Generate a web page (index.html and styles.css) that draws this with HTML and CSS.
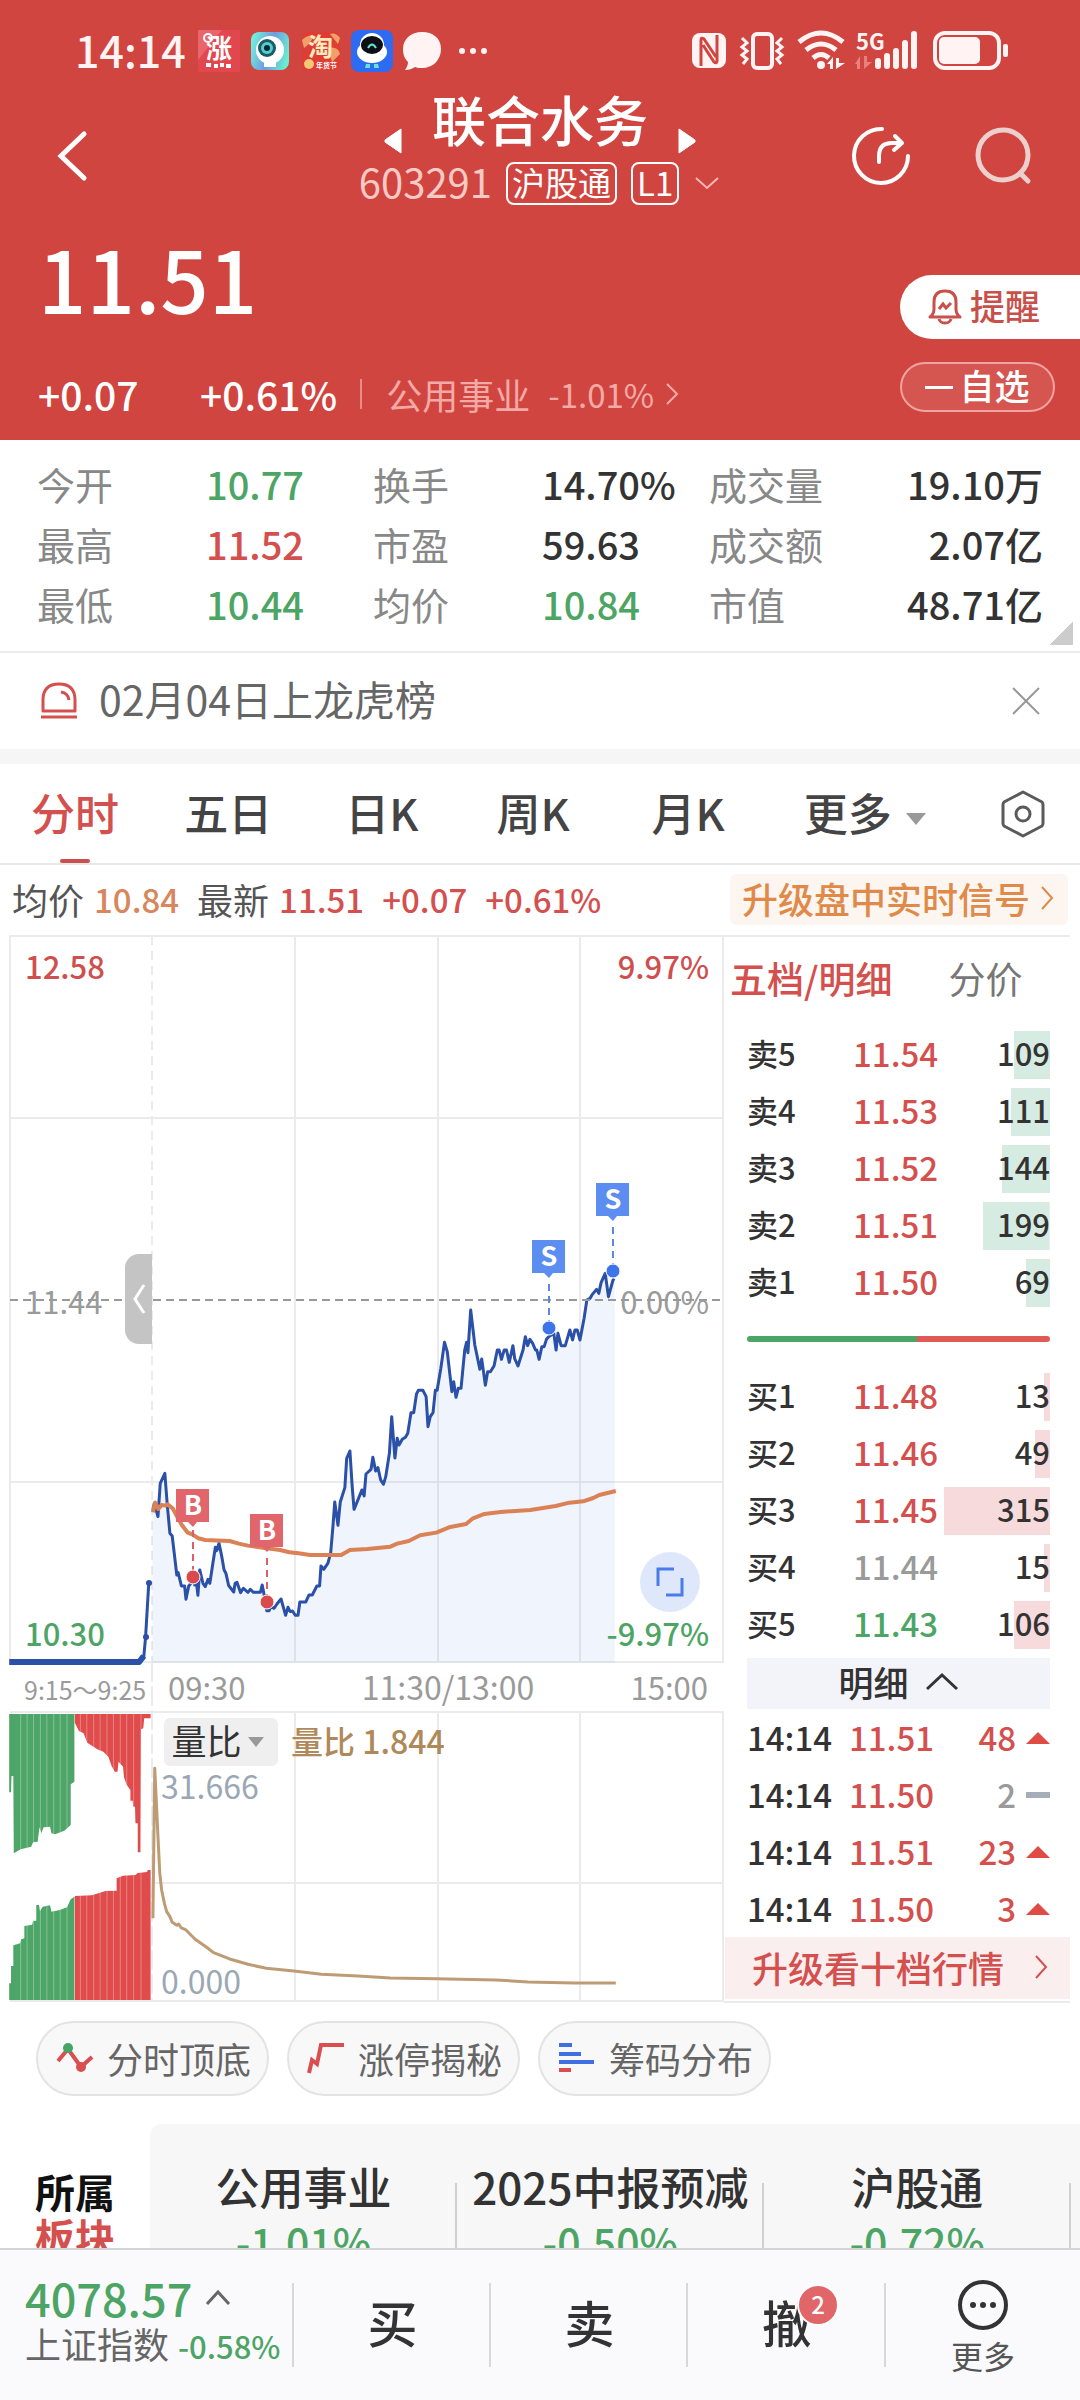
FILE: index.html
```html
<!DOCTYPE html>
<html lang="zh-CN">
<head>
<meta charset="utf-8">
<meta name="viewport" content="width=device-width, initial-scale=1">
<title>联合水务 603291</title>
<link rel="stylesheet" href="styles.css">
</head>
<body>
<div class="app">
  <header class="top">
    <div class="status">
      <span class="clock">14:14</span>
      <svg class="app-icon" viewBox="0 0 42 42"><rect width="42" height="42" fill="#e2474f"/><path d="M0 0H24L0 30Z" fill="#e9656c"/><text x="8" y="28" font-size="26" font-weight="700" fill="#fff">涨</text><circle cx="10" cy="8" r="4" fill="none" stroke="#fff" stroke-width="2"/><path d="M8 35h5M16 36h4M22 35h4M28 36h5" stroke="#fff" stroke-width="4"/></svg>
      <svg class="app-icon" viewBox="0 0 42 42"><defs><linearGradient id="cam" x1="0" y1="0.3" x2="1" y2="0.6"><stop offset="0" stop-color="#6ff0dc"/><stop offset=".5" stop-color="#6f9be0"/><stop offset="1" stop-color="#68efd0"/></linearGradient></defs><rect x="2" y="2" width="38" height="38" rx="8" fill="url(#cam)"/><circle cx="21" cy="20" r="14" fill="#fff"/><path d="M15 37v-4h12v4z" fill="#fff"/><circle cx="18" cy="18" r="9" fill="#1c5a68"/><circle cx="18" cy="18" r="6" fill="#4fd0cf"/><circle cx="18" cy="18" r="3" fill="#123"/></svg>
      <svg class="app-icon" viewBox="0 0 42 42"><rect x="2" y="2" width="38" height="38" rx="6" fill="#df3d33"/><path d="M2 10Q8 4 14 6Q10 14 4 18ZM40 8Q36 2 30 4L38 14ZM28 18Q38 16 40 24L32 32Z" fill="#f0a06a"/><circle cx="9" cy="34" r="5" fill="#f5c878"/><text x="8" y="26" font-size="25" font-weight="700" fill="#ffe9bd">淘</text><text x="16" y="38" font-size="7" font-weight="700" fill="#fff">年货节</text></svg>
      <svg class="app-icon" viewBox="0 0 42 42"><rect width="42" height="42" rx="8" fill="#2d6bf2"/><ellipse cx="21" cy="22" rx="15" ry="11" fill="#fff"/><circle cx="21" cy="15" r="12" fill="#fff"/><ellipse cx="21" cy="15" rx="11" ry="9" fill="#0c1016"/><path d="M17 18q4-7 8 0" fill="none" stroke="#62e6d0" stroke-width="2"/><path d="M15 34h4v4h-5zM23 34h4l1 4h-5z" fill="#62e6d0"/></svg>
      <svg class="bubble" viewBox="0 0 40 40"><path d="M20 1C9 1 1 8 1 18c0 6 2 10 5 13 0 3-1 5-3 8 4 0 7-1 10-3 2 1 5 1 7 1 11 0 19-8 19-19S31 1 20 1Z" fill="#fff4f3"/></svg>
      <svg class="dots" viewBox="0 0 30 8"><g fill="#fff4f3"><circle cx="4" cy="4" r="3"/><circle cx="15" cy="4" r="3"/><circle cx="26" cy="4" r="3"/></g></svg>
      <span class="spring"></span>
      <svg class="sys" viewBox="0 0 318 42" role="img" aria-label="NFC 振动 WiFi 5G 电量">
        <rect x="0" y="3" width="34" height="35" rx="8" fill="#fff4f3"/>
        <path d="M9 36V10q0-3 3-1l12 18M25 5v26q0 3-3 1L11 15" fill="none" stroke="#d0453f" stroke-width="3"/>
        <rect x="61" y="4" width="19" height="34" rx="4" fill="none" stroke="#fff4f3" stroke-width="4"/>
        <path d="M50 8l5 5-5 4 5 4-5 4 5 4-4 5M90 8l-5 5 5 4-5 4 5 4-5 4 4 5" fill="none" stroke="#fff4f3" stroke-width="3"/>
        <g fill="none" stroke="#fff4f3" stroke-width="5"><path d="M107 12q22-18 44 0M114 20q15-12 30 0M121 28q8-7 16 0"/></g>
        <circle cx="129" cy="35" r="4" fill="#fff4f3"/><path d="M135 34l6-7v12h-3v-5zM144 39V28h3v5h6z" fill="#fff4f3"/>
        <text x="164" y="20" font-size="22" font-weight="700" fill="#fff4f3">5G</text>
        <path d="M163 34l5-8v13h-3v-5zM172 39V26h3v6h5z" fill="#e8807c"/>
        <g stroke="#fff4f3" stroke-width="6" stroke-linecap="round"><path d="M186 31v5M195 26v10M204 21v15M213 13v23M222 4v32"/></g>
        <rect x="243" y="3" width="64" height="35" rx="10" fill="none" stroke="#fff4f3" stroke-width="4"/><rect x="247" y="7" width="41" height="27" rx="5" fill="#fff4f3"/><rect x="311" y="14" width="5" height="13" rx="2" fill="#fff4f3"/>
      </svg>
    </div>

    <nav class="nav">
      <button class="icon-btn back" aria-label="返回"><svg viewBox="0 0 30 50"><path d="M27 3L4 25l23 22" fill="none" stroke="#fff" stroke-width="5" stroke-linecap="round"/></svg></button>
      <div class="title">
        <div class="title-row">
          <button class="icon-btn tri" aria-label="上一只"><svg viewBox="0 0 18 26"><path d="M17 1v24L1 14v-2z" fill="#fff" stroke="#fff" stroke-linejoin="round"/></svg></button>
          <h1>联合水务</h1>
          <button class="icon-btn tri" aria-label="下一只"><svg viewBox="0 0 18 26"><path d="M1 1v24l16-11v-2z" fill="#fff" stroke="#fff" stroke-linejoin="round"/></svg></button>
        </div>
        <div class="code-row">
          <span class="code">603291</span><span class="tag">沪股通</span><span class="tag">L1</span>
          <button class="icon-btn more" aria-label="展开"><svg viewBox="0 0 26 14"><path d="M2 2l11 10L24 2" fill="none" stroke="#f6b8b5" stroke-width="2"/></svg></button>
        </div>
      </div>
      <div class="nav-right">
        <button class="icon-btn tool" aria-label="分享"><svg viewBox="0 0 60 60"><path d="M31 3A27 27 0 1 0 57 30" fill="none" stroke="#fff" stroke-width="4" stroke-linecap="round"/><path d="M28 36v-6Q28 17 41 17h9M44 10l7 7-8 7" fill="none" stroke="#fff" stroke-width="4" stroke-linecap="round" stroke-linejoin="round"/></svg></button>
        <button class="icon-btn tool" aria-label="搜索"><svg viewBox="0 0 60 60"><circle cx="30" cy="29" r="25" fill="none" stroke="#edcfce" stroke-width="5"/><path d="M47 47l8 8" stroke="#edcfce" stroke-width="5" stroke-linecap="round"/></svg></button>
      </div>
    </nav>

    <section class="quote">
      <div class="quote-main">
        <div class="price">11.51</div>
        <div class="change">
          <span class="diff">+0.07</span><span class="pct">+0.61%</span><i class="vline"></i>
          <a class="sector" href="#sector">公用事业 <small>-1.01%</small><svg viewBox="0 0 14 24"><path d="M2 2l10 10L2 22" fill="none" stroke="#f3aaa6" stroke-width="2"/></svg></a>
        </div>
      </div>
      <div class="quote-actions">
        <button class="remind"><svg viewBox="0 0 34 36"><path d="M2 28q4-3 4-8v-7Q6 2 17 2t11 11v7q0 5 4 8zM11 30q1 4 6 4t6-4" fill="none" stroke="#c8504a" stroke-width="3" stroke-linejoin="round"/><path d="M11 20l4-5 3 4 5-5" fill="none" stroke="#c8504a" stroke-width="3"/></svg>提醒</button>
        <button class="fav"><i></i>自选</button>
      </div>
    </section>
  </header>

  <main class="scroll">
    <dl class="stats">
      <dt>今开</dt><dd class="down">10.77</dd><dt>换手</dt><dd>14.70%</dd><dt>成交量</dt><dd class="end">19.10万</dd>
      <dt>最高</dt><dd class="up">11.52</dd><dt>市盈</dt><dd>59.63</dd><dt>成交额</dt><dd class="end">2.07亿</dd>
      <dt>最低</dt><dd class="down">10.44</dd><dt>均价</dt><dd class="down">10.84</dd><dt>市值</dt><dd class="end">48.71亿</dd>
    </dl>

    <div class="notice">
      <svg viewBox="0 0 38 38"><path d="M3 29V18Q3 2 19 2t16 16v11z" fill="none" stroke="#d4504e" stroke-width="3" stroke-linejoin="round"/><path d="M21 10q7 1 8 8" fill="none" stroke="#d4504e" stroke-width="3"/><path d="M1 35h36" stroke="#d4504e" stroke-width="3"/></svg>
      <span>02月04日上龙虎榜</span>
      <button class="icon-btn close" aria-label="关闭"><svg viewBox="0 0 28 28"><path d="M1 1l26 26M27 1L1 27" stroke="#999" stroke-width="2"/></svg></button>
    </div>

    <div class="tabs" role="tablist">
      <button role="tab" aria-selected="true" class="on">分时</button><button role="tab">五日</button><button role="tab">日K</button><button role="tab">周K</button><button role="tab">月K</button><button role="tab">更多<i class="caret"></i></button>
      <button class="hex" aria-label="设置"><svg viewBox="0 0 44 48"><path d="M22 2L41 12Q42 13 42 15V33Q42 35 41 36L22 46 3 36Q2 35 2 33V15Q2 13 3 12Z" fill="none" stroke="#5a5a5a" stroke-width="3" stroke-linejoin="round"/><circle cx="22" cy="24" r="7" fill="none" stroke="#5a5a5a" stroke-width="3"/></svg></button>
    </div>

    <div class="info">
      <span>均价</span><b class="avg">10.84</b><span class="next">最新</span><b class="up">11.51</b><b class="up next">+0.07</b><b class="up next">+0.61%</b>
      <a class="signal" href="#signal">升级盘中实时信号<svg viewBox="0 0 14 26"><path d="M2 2l10 11L2 24" fill="none" stroke="#e08a4a" stroke-width="2"/></svg></a>
    </div>

    <div class="board">
      <div class="chart">
        <svg class="plot" viewBox="0 935 724 1068">
          <g fill="none" stroke="#ebebeb" stroke-width="2">
            <path d="M9 936H724M10 1118H724M10 1482H724M10 1662H724M10 1712H724M152 1883H724M10 2001H724"/>
            <path d="M10 936V1662M295 936V1662M438 936V1662M580 936V1662M723 936V1662M295 1712V2001M438 1712V2001M580 1712V2001M723 1712V2001"/>
            <path d="M152 936V1662" stroke-dasharray="9 6"/><path d="M152 1662V2001" stroke-dasharray="20 4"/>
          </g>
          <g transform="translate(0 1300) scale(.4592 .3333)">
            <path fill="#3d7de8" fill-opacity=".08" d="M332 1088V610L344 650 349 550 359 520 364 610 370 700 375 708 385 825 395 858 405 898 411 858 420 832 431 886 435 810 447 860 457 850 469 742 477 730 488 810 498 857 509 876 516 847 524 878 567 877 571 855 581 932 597 925 612 897 622 946 649 946 653 906 666 906 680 885 696 858 699 798 714 790 720 760 729 606 736 676 741 606 751 563 755 475 762 453 771 628 788 570 793 588 797 522 808 508 812 472 835 553 848 460 853 350 860 474 865 415 888 400 895 338 907 282 921 271 928 290 932 380 943 338 948 271 968 127 984 275 993 292 1004 265 1016 127 1025 30 1034 135 1045 208 1057 256 1076 197 1083 150 1128 198 1144 110 1174 178 1195 110 1231 137 1263 120 1278 0 1299-32 1318-80 1325-10 1339-60V1088Z"/>
            <g fill="none" stroke-linejoin="round">
              <path vector-effect="non-scaling-stroke" stroke="#2b50a8" stroke-width="3" d="M333 630L336 610 344 650 349 550 359 520 364 610 370 700 375 708 385 825 388 818 395 858 402 858 405 898 411 858 416 850 420 832 424 855 428 850 431 886 435 810 442 850 447 860 453 838 457 850 463 795 469 742 472 752 477 730 483 770 488 810 492 820 498 857 509 876 512 850 516 847 524 878 530 865 540 877 545 868 552 877 567 877 571 855 576 890 581 932 586 932 590 920 597 925 603 912 612 897 622 946 627 922 632 935 637 933 643 946 649 946 653 906 666 906 673 885 680 885 690 858 696 858 699 798 705 808 714 790 720 760 725 680 729 606 736 676 741 606 751 563 755 475 762 453 767 560 771 628 778 605 788 570 793 588 797 522 808 508 812 472 818 513 823 503 829 540 835 553 840 530 848 460 853 350 860 474 865 415 869 435 876 418 883 412 888 400 895 338 901 338 907 282 911 271 921 271 928 290 932 380 937 350 943 338 948 271 952 271 960 205 968 127 974 155 984 275 988 245 993 292 998 265 1004 265 1012 150 1016 127 1019 158 1025 30 1034 135 1045 208 1049 177 1057 256 1062 215 1068 215 1076 197 1083 150 1087 150 1092 178 1098 150 1103 150 1109 187 1117 137 1121 177 1128 198 1139 150 1144 110 1149 137 1154 118 1160 130 1166 150 1169 150 1174 178 1180 140 1185 140 1190 118 1195 110 1206 100 1211 150 1215 100 1222 137 1231 137 1241 90 1247 120 1252 90 1257 90 1263 120 1272 55 1278 0 1285-5 1290-17 1299-32 1304-20 1309-52 1318-80 1325-10 1335-60 1338-64"/>
              <path vector-effect="non-scaling-stroke" stroke="#2b50a8" stroke-width="3" d="M303 1086L313 1072 317 1012 324 848"/>
              <path vector-effect="non-scaling-stroke" stroke="#2b50a8" stroke-width="6" d="M20 1086H303L313 1068"/>
              <path vector-effect="non-scaling-stroke" stroke="#da8256" stroke-width="4" d="M333 637L338 608 345 627 352 615 360 617 365 613 376 625 385 648 396 675 408 697 420 704 432 715 447 720 500 723 520 731 540 737 581 745 610 750 630 757 650 760 675 765 743 765 762 750 800 747 850 740 865 731 890 723 915 706 950 698 978 682 1015 672 1030 655 1055 642 1090 636 1155 630 1210 618 1240 608 1270 604 1292 594 1305 585 1341 573"/>
            </g>
          </g>
          <circle cx="149" cy="1583" r="3" fill="#2b50a8"/><circle cx="146" cy="1637" r="3" fill="#2b50a8"/>
          <path d="M10 1300H724" stroke="#999" stroke-width="2" stroke-dasharray="8 5"/>
          <g class="flag">
            <path d="M193 1530V1575M267 1558V1600" stroke="#d9606a" stroke-width="2" stroke-dasharray="7 5"/>
            <path d="M549 1284V1326M613 1227V1269" stroke="#5a8ae0" stroke-width="2" stroke-dasharray="7 5"/>
            <g fill="#e0666c"><path d="M176 1489h33v33h-12l-4 5-5-5h-12zM250 1514h33v33h-12l-4 5-5-5h-12z"/></g>
            <g fill="#5c8df0"><path d="M532 1240h33v33h-12l-4 5-5-5h-12zM596 1183h33v33h-12l-4 5-5-5h-12z"/></g>
            <g fill="#d94a4c" stroke="#fff"><circle cx="193" cy="1577" r="7"/><circle cx="267" cy="1602" r="7"/></g>
            <g fill="#3d74ea" stroke="#fff"><circle cx="549" cy="1328" r="7"/><circle cx="613" cy="1271" r="7"/></g>
            <g fill="#fff" font-size="27" font-weight="700" text-anchor="middle"><text x="193" y="1515">B</text><text x="267" y="1540">B</text><text x="549" y="1266">S</text><text x="613" y="1209">S</text></g>
          </g>
          <g font-size="31" font-weight="500">
            <text x="25" y="979" fill="#cf4f4f">12.58</text><text x="709" y="979" fill="#cf4f4f" text-anchor="end">9.97%</text>
            <text x="25" y="1646" fill="#4da565">10.30</text><text x="709" y="1646" fill="#4da565" text-anchor="end">-9.97%</text>
            <g fill="#9a9a9a" font-weight="400"><text x="25" y="1314">11.44</text><text x="709" y="1314" text-anchor="end">0.00%</text>
            <text x="24" y="1700" font-size="25">9:15～9:25</text><text x="168" y="1700">09:30</text><text x="448" y="1700" font-size="32" text-anchor="middle">11:30/13:00</text><text x="708" y="1700" text-anchor="end">15:00</text></g>
            <text x="291" y="1754" font-size="32" fill="#b0895a">量比 1.844</text>
            <g fill="#9aa8b4" font-size="32" font-weight="400"><text x="161" y="1799">31.666</text><text x="161" y="1994">0.000</text></g>
          </g>
          <g transform="translate(0 1690) scale(.4592 .3333)">
            <path fill="#4da667" d="M20 72H162V275L154 283V405L140 422 120 433 112 430 109 410 95 412 90 430 86 412 82 455 72 457 68 470 45 478 30 490 29 258H25L24 307H20ZM20 930V880H24V828H29V766L44 760 46 748 53 745V708L70 704 72 692H79V645H85L87 663 93 650 109 646 112 665 130 660 146 652 154 628 162 620V930Z"/>
            <path fill="#e04c4c" d="M163 72H328V85H314L312 115 307 118 306 487H300V400H295L294 350H290L289 332H284V300L276 285 270 262 268 230 258 215 256 245H250L243 228 236 200 225 185 212 178 190 158 182 130 172 123 163 98ZM163 930V618L200 616 230 603 254 602V565L268 557 295 555 300 549 320 546 322 540H328V930Z"/>
            <path vector-effect="non-scaling-stroke" fill="none" stroke="#fff" stroke-opacity=".3" d="M45 72V930M59 72V930M73 72V930M88 72V930M102 72V930M117 72V930M131 72V930M146 72V930M175 72V930M189 72V930M204 72V930M218 72V930M233 72V930M247 72V930M262 72V930M276 72V930M291 72V930M307 72V930"/>
            <path vector-effect="non-scaling-stroke" fill="none" stroke="#bd9c75" stroke-width="3" stroke-linejoin="round" d="M333 685L337 235 344 440 348 550 352 600 358 640 363 665 370 680 375 697 385 706 389 702 395 714 405 720 425 748 450 772 465 788 500 807 540 823 580 835 640 843 700 853 780 858 850 864 950 866 1080 870 1150 876 1250 879 1341 879"/>
          </g>
        </svg>
        <button class="handle" aria-label="收起"><svg viewBox="0 0 16 32"><path d="M13 2L4 16l9 14" fill="none" stroke="#fff" stroke-width="3"/></svg></button>
        <button class="expand" aria-label="全屏"><svg viewBox="0 0 60 60"><path d="M18 34V17H34M42 26V43H26" fill="none" stroke="#4a7ce8" stroke-width="3"/></svg></button>
        <div class="metric"><select aria-label="指标"><option>量比</option></select><i class="caret"></i></div>
      </div>

      <aside class="side">
        <div class="side-tabs"><button class="on">五档/明细</button><button>分价</button></div>
        <table class="depth sell">
          <tr style="--w:12%"><th scope="row">卖5</th><td class="up">11.54</td><td>109</td></tr>
          <tr style="--w:13%"><th scope="row">卖4</th><td class="up">11.53</td><td>111</td></tr>
          <tr style="--w:16%"><th scope="row">卖3</th><td class="up">11.52</td><td>144</td></tr>
          <tr style="--w:22%"><th scope="row">卖2</th><td class="up">11.51</td><td>199</td></tr>
          <tr style="--w:8%"><th scope="row">卖1</th><td class="up">11.50</td><td>69</td></tr>
        </table>
        <div class="ratio"><i style="flex-grow:56"></i><i style="flex-grow:44"></i></div>
        <table class="depth buy">
          <tr style="--w:2%"><th scope="row">买1</th><td class="up">11.48</td><td>13</td></tr>
          <tr style="--w:5%"><th scope="row">买2</th><td class="up">11.46</td><td>49</td></tr>
          <tr style="--w:35%"><th scope="row">买3</th><td class="up">11.45</td><td>315</td></tr>
          <tr style="--w:2%"><th scope="row">买4</th><td class="flat">11.44</td><td>15</td></tr>
          <tr style="--w:12%"><th scope="row">买5</th><td class="down">11.43</td><td>106</td></tr>
        </table>
        <button class="ticks-head">明细<svg viewBox="0 0 34 18"><path d="M2 16L17 2l15 14" fill="none" stroke="#333" stroke-width="3"/></svg></button>
        <table class="ticks">
          <tr><td>14:14</td><td class="up">11.51</td><td class="up">48</td><td><i class="rise"></i></td></tr>
          <tr><td>14:14</td><td class="up">11.50</td><td class="flat">2</td><td><i class="same"></i></td></tr>
          <tr><td>14:14</td><td class="up">11.51</td><td class="up">23</td><td><i class="rise"></i></td></tr>
          <tr><td>14:14</td><td class="up">11.50</td><td class="up">3</td><td><i class="rise"></i></td></tr>
        </table>
        <a class="upgrade" href="#level2">升级看十档行情<svg viewBox="0 0 14 26"><path d="M2 2l10 11L2 24" fill="none" stroke="#d4504e" stroke-width="2"/></svg></a>
      </aside>
    </div>

    <div class="chips">
      <button><svg viewBox="0 0 38 32"><path d="M2 19L12 7 25 25 36 15" fill="none" stroke="#d94f50" stroke-width="4"/><circle cx="12" cy="6" r="5" fill="#45a566"/><circle cx="25" cy="25" r="5" fill="#d94f50"/></svg>分时顶底</button>
      <button><svg viewBox="0 0 38 32"><path d="M2 31L5 18 10 22 14 3H37" fill="none" stroke="#d94f50" stroke-width="4"/></svg>涨停揭秘</button>
      <button><svg viewBox="0 0 38 32"><path d="M1 3H14M1 12H23M1 20H36" stroke="#3f6fe0" stroke-width="4"/><path d="M1 28H13" stroke="#d94f50" stroke-width="4"/></svg>筹码分布</button>
    </div>

    <section class="sectors" id="sector">
      <h2><span>所属</span><span class="up">板块</span></h2>
      <ul>
        <li><span>公用事业</span><b>-1.01%</b></li>
        <li><span>2025中报预减</span><b>-0.50%</b></li>
        <li><span>沪股通</span><b>-0.72%</b></li>
      </ul>
    </section>
  </main>

  <footer class="dock">
    <button class="index"><span class="index-top">4078.57<svg viewBox="0 0 26 16"><path d="M2 14L13 2l11 12" fill="none" stroke="#666" stroke-width="3"/></svg></span><span class="index-name">上证指数<small>-0.58%</small></span></button>
    <button class="act">买</button>
    <button class="act">卖</button>
    <button class="act"><span class="badged">撤<em>2</em></span></button>
    <button class="others"><svg viewBox="0 0 52 52"><circle cx="26" cy="26" r="23" fill="none" stroke="#333" stroke-width="4"/><g fill="#333"><circle cx="16" cy="26" r="3"/><circle cx="26" cy="26" r="3"/><circle cx="36" cy="26" r="3"/></g></svg>更多</button>
  </footer>
</div>
</body>
</html>
```
FILE: styles.css
```css
* { box-sizing: border-box; }
body { margin: 0; font-family: "Noto Sans CJK SC", sans-serif; color: #333; background: #fff; }
button, select { font: inherit; color: inherit; background: none; border: 0; padding: 0; margin: 0; cursor: pointer; }
a { color: inherit; text-decoration: none; }
svg { display: block; flex: none; overflow: visible; }
table { border-collapse: separate; border-spacing: 0; width: 100%; table-layout: fixed; }
td, th { padding: 0; font-weight: inherit; text-align: left; }
.up { color: #d4504e; }
.down { color: #4da565; }
.flat { color: #9a9a9a; }
.caret { display: inline-block; border: 10px solid transparent; border-top: 12px solid #999; border-bottom: 0; }

.app { height: 100vh; display: flex; flex-direction: column; }
.top { flex: none; background: #d0453f; color: #fff; }

.status { display: flex; align-items: center; height: 88px; padding: 14px 70px 0 75px; color: #fff4f3; }
.clock { font-size: 43px; font-weight: 500; line-height: 60px; padding-bottom: 4px; margin-right: 12px; }
.app-icon { width: 42px; height: 42px; margin-right: 9px; }
.bubble { width: 40px; height: 40px; }
.dots { width: 30px; height: 8px; margin-left: 16px; }
.spring { flex: 1; }
.sys { width: 318px; height: 42px; }

.icon-btn { display: flex; align-items: center; justify-content: center; }
.nav { display: grid; grid-template-columns: 1fr auto 1fr; align-items: end; padding: 0 47px; }
.back { width: 50px; height: 98px; }
.back svg { width: 30px; height: 50px; }
.title-row { display: flex; align-items: center; justify-content: center; gap: 30px; }
.title h1 { margin: 0; font-size: 54px; font-weight: 500; line-height: 62px; }
.tri { padding-top: 40px; height: 62px; align-items: flex-start; }
.tri svg { width: 18px; height: 26px; }
.code-row { display: flex; align-items: center; justify-content: center; gap: 14px; margin-top: 11px; height: 44px; }
.code { font-size: 40px; line-height: 40px; padding-bottom: 4px; color: #f9c9c6; }
.tag { border: 2px solid #fff; border-radius: 8px; font-size: 33px; line-height: 36px; height: 43px; padding: 0 4px; }
.more { width: 28px; height: 44px; }
.more svg { width: 26px; height: 14px; }
.nav-right { display: flex; justify-content: flex-end; gap: 62px; }
.tool { height: 98px; }
.tool svg { width: 60px; height: 60px; }

.quote { display: flex; justify-content: space-between; padding: 24px 0 21px 38px; }
.price { font-size: 85px; font-weight: 500; line-height: 96px; }
.change { display: flex; align-items: center; margin-top: 44px; font-size: 39px; font-weight: 500; line-height: 50px; }
.diff { min-width: 162px; }
.vline { width: 2px; height: 30px; background: #e58d89; margin: 0 24px 0 23px; }
.sector { display: flex; align-items: center; font-size: 36px; font-weight: 400; color: #f3aaa6; }
.sector small { font-size: 33px; margin: 0 11px 0 18px; }
.sector svg { width: 14px; height: 24px; }
.quote-actions { display: flex; flex-direction: column; gap: 23px; width: 180px; padding-top: 46px; }
.remind { display: flex; align-items: center; height: 64px; padding: 0 0 4px 28px; gap: 8px; background: #fff; color: #c8504a; border-radius: 32px 0 0 32px; font-size: 35px; font-weight: 500; line-height: 60px; }
.remind svg { width: 34px; height: 36px; margin-top: 4px; }
.fav { display: flex; align-items: center; justify-content: center; gap: 6px; width: 155px; height: 50px; border: 2px solid #f0a3a0; border-radius: 25px; background: #d55651; font-size: 35px; font-weight: 500; line-height: 42px; padding-bottom: 4px; }
.fav i { width: 28px; height: 3px; margin-top: 4px; background: #fff; }

.scroll { flex: 1; min-height: 0; overflow-y: auto; scrollbar-width: none; }

.stats { display: grid; grid-template-columns: 169fr 167fr 169fr 167fr 140fr 194fr; margin: 0; padding: 14px 37px 17px; border-bottom: 2px solid #ededed; line-height: 59px; grid-auto-rows: 60px; font-size: 38px; background: linear-gradient(135deg, transparent 50%, #ccc 50%) right 7px bottom 6px / 23px 23px no-repeat; }
.stats dt { color: #888; }
.stats dd { margin: 0; font-size: 38px; font-weight: 500; white-space: nowrap; }
.stats .end { text-align: right; }

.notice { display: flex; align-items: center; height: 96px; padding: 0 40px; font-size: 41px; line-height: 60px; color: #666; }
.notice > svg { width: 38px; height: 38px; margin-right: 21px; }
.notice span { flex: 1; padding-bottom: 6px; }
.close svg { width: 28px; height: 28px; }

.tabs { display: grid; grid-template-columns: 153fr 161fr 151fr 155fr 152fr 197fr 79fr; border-top: 15px solid #f6f6f6; border-bottom: 2px solid #e8e8e8; padding-left: 31px; font-size: 44px; font-weight: 500; line-height: 90px; color: #444; }
.tabs button { height: 99px; padding-bottom: 4px; text-align: left; position: relative; white-space: nowrap; }
.tabs .on { color: #d4504e; }
.tabs .on::after { content: ""; position: absolute; left: 29px; bottom: 0; width: 30px; height: 4px; background: #c9504f; border-radius: 2px; }
.tabs .caret { margin-left: 14px; vertical-align: 6px; }
.hex svg { width: 44px; height: 48px; margin-top: 4px; }

.info { display: flex; align-items: center; height: 70px; padding: 0 12px 2px; font-size: 36px; line-height: 48px; color: #555; }
.info b { font-size: 33px; font-weight: 500; margin-left: 10px; }
.info .next { margin-left: 18px; }
.info .avg { color: #d8875c; }
.signal { display: flex; align-items: center; gap: 10px; margin-left: auto; height: 51px; padding: 0 14px 2px 12px; border-radius: 6px; background: #fdf5ef; color: #e08a4a; font-weight: 500; line-height: 46px; }
.signal svg { width: 14px; height: 26px; }

.board { display: grid; grid-template-columns: 724fr 356fr; }
.chart { position: relative; }
.plot { width: 100%; height: auto; }
.handle { position: absolute; left: 17.3%; top: 29.9%; width: 27px; height: 90px; background: #c4c4c4; border-radius: 14px 0 0 14px; display: flex; align-items: center; justify-content: center; }
.handle svg { width: 16px; height: 32px; }
.expand { position: absolute; left: 88.4%; top: 57.8%; width: 60px; height: 60px; border-radius: 50%; background: #dfe8fb; }
.metric { position: absolute; left: 22.6%; top: 73.3%; display: flex; align-items: center; width: 114px; height: 48px; background: #efefef; border-radius: 6px; padding: 0 10px 0 8px; }
.metric select { appearance: none; width: 74px; font-size: 35px; line-height: 44px; height: 48px; padding-bottom: 4px; }
.metric .caret { border-width: 10px 8px 0; margin-left: 2px; }

.side { border-top: 2px solid #ebebeb; border-bottom: 2px solid #ebebeb; margin-right: 10px; padding-left: 23px; }
.side-tabs { display: flex; gap: 56px; margin-left: -17px; height: 85px; font-size: 37px; line-height: 82px; color: #777; }
.side-tabs button { padding-bottom: 4px; }
.side-tabs .on { color: #d4504e; font-weight: 500; }
.depth, .ratio, .ticks, .ticks-head { width: calc(100% - 20px); }
.depth { border-spacing: 0 9px; }
.depth tr { height: 48px; line-height: 42px; background: linear-gradient(var(--bar), var(--bar)) right / var(--w) 100% no-repeat; }
.sell { --bar: #d6ebe1; }
.buy { --bar: #f6dadc; }
.depth th { width: 35%; font-size: 31px; font-weight: 500; }
.depth th, .depth td { padding-bottom: 4px; vertical-align: middle; }
.depth td { font-size: 33px; font-weight: 500; }
.depth td:last-child { font-size: 31px; text-align: right; }
.ratio { display: flex; height: 6px; margin: 20px 0 22px; border-radius: 3px; overflow: hidden; }
.ratio i { background: #4da565; }
.ratio i + i { background: #e05a55; }
.ticks-head { display: flex; align-items: center; justify-content: center; gap: 16px; height: 51px; padding-bottom: 3px; background: #f3f4f9; font-size: 35px; font-weight: 500; line-height: 46px; }
.ticks-head svg { width: 34px; height: 18px; }
.ticks tr { height: 57px; font-size: 33px; font-weight: 500; line-height: 53px; }
.ticks td:nth-child(1) { width: 102px; }
.ticks td:nth-child(2) { width: 90px; }
.ticks td:nth-child(3) { text-align: right; }
.ticks td:nth-child(4) { width: 34px; }
.rise { display: block; width: 24px; margin-left: auto; border: 12px solid transparent; border-bottom-color: #e04c44; border-top: 0; }
.same { display: block; width: 24px; height: 6px; margin-left: auto; background: #a5adb8; }
.upgrade { display: flex; align-items: center; justify-content: space-between; margin-left: -22px; height: 62px; padding: 0 22px 2px 27px; background: #fbeeef; color: #d4504e; font-size: 36px; font-weight: 500; line-height: 56px; }
.upgrade svg { width: 14px; height: 26px; }

.chips { display: flex; gap: 18px; padding: 18px 36px 28px; }
.chips button { display: flex; align-items: center; gap: 13px; height: 75px; padding: 0 16px 2px 18px; border: 2px solid #e3e3e3; border-radius: 38px; background: #f8f8f8; color: #666; font-size: 36px; line-height: 60px; }
.chips svg { width: 38px; height: 32px; }

.sectors { display: grid; grid-template-columns: 150px 1fr; }
.sectors h2 { margin: 0; padding: 45px 0 0 35px; font-size: 40px; font-weight: 700; line-height: 45px; color: #111; }
.sectors h2 span { display: block; }
.sectors h2 .up { color: #d4504e; }
.sectors ul { display: flex; margin: 0; padding: 32px 0 20px; list-style: none; background: #f7f7f7; border-radius: 12px 0 0 0; overflow: hidden; }
.sectors li { flex: 0 0 33%; text-align: center; white-space: nowrap; background: linear-gradient(#d0d0d0, #d0d0d0) right 27px / 2px 100% no-repeat; }
.sectors li span { display: block; font-size: 44px; font-weight: 500; line-height: 60px; }
.sectors li b { display: block; font-size: 41px; font-weight: 500; line-height: 50px; color: #4da565; }

.dock { flex: none; display: grid; grid-template-columns: 294fr 197fr 197fr 198fr 194fr; height: 152px; border-top: 2px solid #d5d5d8; background: #fafafc; }
.dock > button { display: flex; flex-direction: column; background: linear-gradient(#d8d8dc, #d8d8dc) right 33px / 2px 84px no-repeat; }
.dock > .others { background: none; }
.dock > .index { align-items: flex-start; padding: 26px 0 0 25px; white-space: nowrap; }
.index-top { display: flex; align-items: center; gap: 13px; font-size: 45px; font-weight: 500; line-height: 44px; color: #4da565; }
.index-top svg { width: 26px; height: 16px; }
.index-name { font-size: 36px; line-height: 46px; color: #666; }
.index-name small { margin-left: 9px; font-size: 31px; font-weight: 500; color: #4da565; }
.dock .act { align-items: center; justify-content: center; font-size: 50px; font-weight: 500; line-height: 70px; padding-bottom: 8px; }
.badged { position: relative; }
.badged em { position: absolute; left: 35px; top: -2px; width: 42px; height: 42px; border: 2px solid #fff; border-radius: 50%; background: #e0666a; color: #fff; font-style: normal; font-size: 24px; line-height: 36px; text-align: center; }
.others { align-items: center; padding-top: 29px; font-size: 32px; line-height: 48px; color: #555; }
.others svg { width: 52px; height: 52px; }
```
